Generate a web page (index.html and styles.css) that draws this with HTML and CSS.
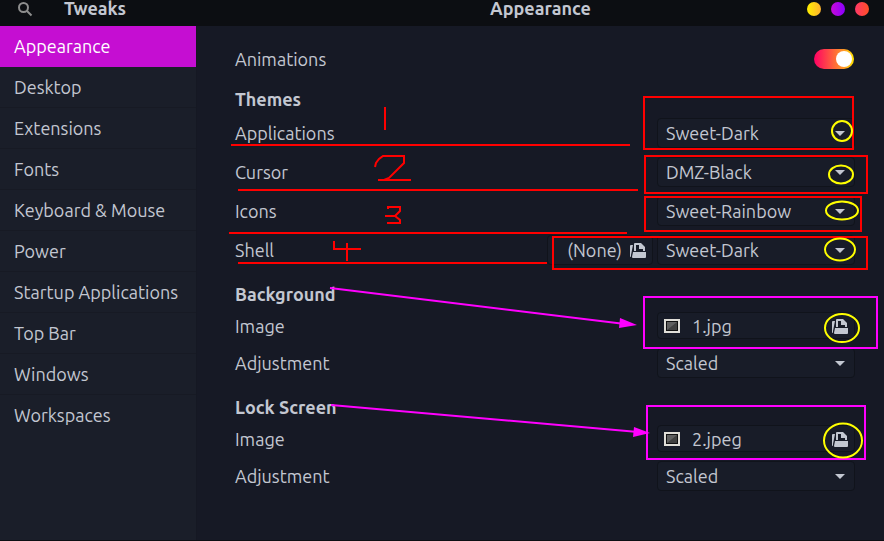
FILE: index.html
```
<!DOCTYPE html>
<html lang="en">
<head>
<meta charset="utf-8">
<title>Tweaks</title>
<link rel="stylesheet" href="styles.css">
</head>
<body>

<svg class="defs" aria-hidden="true">
	<symbol id="open" viewBox="0 0 16 16">
		<path d="M0 4q0-1 1-1h2L1 13v2q-1 0-1-1z"/>
		<path d="M4 9V2q0-1 1-1h6l4 4v4h-2V7H9V3H6v6z"/>
		<path d="M3 10h13v5q0 1-1 1H3q-1 0-1-1z"/>
	</symbol>
	<symbol id="arrow" viewBox="0 0 10 6">
		<path d="M0 0h10L5 5z"/>
	</symbol>
	<symbol id="picture" viewBox="0 0 16 14">
		<path d="M0 0h16v14H0z" fill="#e0ded8"/>
		<path d="M2 2h12v10H2z" fill="#111"/>
		<path d="M3 3h10v8H3z" fill="#606060"/>
		<path d="M3 11 13 3v8z" fill="#404040"/>
	</symbol>
</svg>

<div class="window">

<header class="titlebar">
	<div class="side-title">
		<button class="search" aria-label="Search">
			<svg width="16" height="16" viewBox="0 0 16 16" fill="none" stroke="#8e8e8e" stroke-width="2"><circle cx="6.5" cy="6.5" r="4.5"/><path d="M10 10l4.500 4.500"/></svg>
		</button>
		<h1>Tweaks</h1>
	</div>
	<div class="main-title">
		<h1>Appearance</h1>
		<div class="controls">
			<button class="dot minimize" aria-label="Minimize"></button>
			<button class="dot maximize" aria-label="Maximize"></button>
			<button class="dot close" aria-label="Close"></button>
		</div>
	</div>
</header>

<nav class="sidebar">
	<a class="active" href="#appearance">Appearance</a>
	<a href="#desktop">Desktop</a>
	<a href="#extensions">Extensions</a>
	<a href="#fonts">Fonts</a>
	<a href="#keyboard">Keyboard &amp; Mouse</a>
	<a href="#power">Power</a>
	<a href="#startup">Startup Applications</a>
	<a href="#topbar">Top Bar</a>
	<a href="#windows">Windows</a>
	<a href="#workspaces">Workspaces</a>
</nav>

<main class="content">
	<div class="row">
		<label for="animations">Animations</label>
		<input class="switch" type="checkbox" id="animations" checked>
	</div>

	<section class="group themes">
		<h2>Themes</h2>
		<div class="row">
			<label for="applications">Applications</label>
			<div class="combo"><select id="applications"><option>Sweet-Dark</option></select><svg class="arrow"><use href="#arrow"/></svg></div>
		</div>
		<div class="row">
			<label for="cursor">Cursor</label>
			<div class="combo"><select id="cursor"><option>DMZ-Black</option></select><svg class="arrow"><use href="#arrow"/></svg></div>
		</div>
		<div class="row">
			<label for="icons">Icons</label>
			<div class="combo"><select id="icons"><option>Sweet-Rainbow</option></select><svg class="arrow"><use href="#arrow"/></svg></div>
		</div>
		<div class="row">
			<label for="shell">Shell</label>
			<button class="none">(None)<svg class="open"><use href="#open"/></svg></button>
			<div class="combo"><select id="shell"><option>Sweet-Dark</option></select><svg class="arrow"><use href="#arrow"/></svg></div>
		</div>
	</section>

	<section class="group">
		<h2>Background</h2>
		<div class="row file-row">
			<label for="bg-image">Image</label>
			<button class="file" id="bg-image"><svg class="picture"><use href="#picture"/></svg><span>1.jpg</span><svg class="open"><use href="#open"/></svg></button>
		</div>
		<div class="row">
			<label for="bg-adjust">Adjustment</label>
			<div class="combo"><select id="bg-adjust"><option>Scaled</option></select><svg class="arrow"><use href="#arrow"/></svg></div>
		</div>
	</section>

	<section class="group">
		<h2>Lock Screen</h2>
		<div class="row file-row">
			<label for="lock-image">Image</label>
			<button class="file" id="lock-image"><svg class="picture"><use href="#picture"/></svg><span>2.jpeg</span><svg class="open"><use href="#open"/></svg></button>
		</div>
		<div class="row">
			<label for="lock-adjust">Adjustment</label>
			<div class="combo"><select id="lock-adjust"><option>Scaled</option></select><svg class="arrow"><use href="#arrow"/></svg></div>
		</div>
	</section>
</main>

</div>

<!-- pen marks over the settings -->
<svg class="marks" width="884" height="541" viewBox="0 0 884 541" aria-hidden="true">
	<g class="red">
		<path d="M231 145H630M238 190H638M229 233H627M238 263H547"/>
		<path d="M385 107v23"/>
		<path d="M375 167l1-4 3-4 4-3h21v7l-15 15-5 2h-6M378 180h33"/>
		<path d="M388 209v-2h12v4l-5 5h-10M395 216l5 4v3h-13"/>
		<path d="M334 241v8h27M347 243v18"/>
		<path d="M644 97H853V149H644zM645 156H867V193H645zM645 197H861V231H645zM553 237H867V269H553z"/>
	</g>
	<g class="pink">
		<path d="M644 297H877V348H644zM647 406H865V459H647z"/>
		<path d="M330 288L625 324M331 405L638 432"/>
		<path class="head" d="M637 325l-18 3 1-10zM650 433l-17 4 1-10z"/>
	</g>
	<g class="yellow">
		<ellipse cx="842" cy="131" rx="10" ry="10"/>
		<ellipse cx="841" cy="174.500" rx="12" ry="9"/>
		<ellipse cx="842" cy="210.500" rx="16" ry="9"/>
		<ellipse cx="840" cy="249.500" rx="15" ry="11"/>
		<ellipse cx="842" cy="328" rx="17" ry="14"/>
		<ellipse cx="843" cy="440.500" rx="19" ry="17"/>
	</g>
</svg>

</body>
</html>
```

FILE: styles.css
```
* { box-sizing: border-box; }
body { margin: 0; background: #161925; color: #c3c7d1; font: 18px/24px "Ubuntu", "Noto Sans", sans-serif; }
h1, h2 { margin: 0; font-size: 18px; line-height: 24px; font-weight: bold; }
button, select { margin: 0; padding: 0; font: inherit; color: inherit; background: none; border: 0; }
svg { display: block; fill: #c3c7d1; }
.defs { position: absolute; width: 0; height: 0; }

.window { display: grid; grid-template-columns: 197px 1fr; grid-template-rows: 26px 1fr; min-height: 100vh; border-bottom: 1px solid #0c0e13; }

.titlebar { grid-column: 1 / 3; display: grid; grid-template-columns: subgrid; background: #0c0e12; padding-bottom: 9px; }
.titlebar h1 { line-height: 17px; }
.side-title { display: flex; align-items: center; gap: 31px; padding-left: 17px; }
.search svg { fill: none; }
.main-title { display: grid; grid-template-columns: 1fr auto 1fr; align-items: center; }
.main-title h1 { grid-column: 2; }
.controls { display: flex; justify-content: flex-end; gap: 10px; padding-right: 15px; }
.dot { width: 14px; height: 14px; border-radius: 50%; }
.minimize { background: linear-gradient(90deg, #fff000, #ffb22e); }
.maximize { background: linear-gradient(90deg, #c80ad8, #8a00ff); }
.close { background: linear-gradient(90deg, #ff3868, #ff4f25); }

.sidebar { background: #1a1e29; border-right: 1px solid #151823; }
.sidebar a { display: block; height: 41px; padding: 8px 14px; border-bottom: 1px solid #171a24; color: inherit; text-decoration: none; white-space: nowrap; }
.sidebar a.active { background: #c50ed2; border-color: #c50ed2; color: #fff; }
.sidebar a:last-child { border-color: transparent; }

.content { padding: 18px 29px 18px 38px; }
.row { display: flex; align-items: center; gap: 4px; height: 30px; margin-bottom: 9px; }
.row label { margin-right: auto; }
.row:last-child { margin-bottom: 0; }
.file-row { height: 27px; }
.group { margin-top: 17px; }
.group h2 { margin-bottom: 6px; }
.themes { margin-top: 13px; }
.themes h2 { margin-bottom: 7px; }

.combo, .file, .none { border: 1px solid #10131b; border-radius: 4px; background: #181c28; }
.combo { position: relative; width: 198px; height: 30px; }
.combo select { appearance: none; width: 100%; height: 28px; padding: 0 30px 0 8px; }
.arrow { position: absolute; right: 9px; top: 12px; width: 10px; height: 6px; pointer-events: none; }
.file { display: flex; align-items: center; width: 198px; height: 27px; padding: 0 6px; }
.file span { margin: 0 auto 0 12px; }
.picture { width: 16px; height: 14px; }
.open { width: 16px; height: 16px; }
.none { display: flex; align-items: center; justify-content: flex-end; gap: 8px; width: 106px; height: 30px; padding: 0 6px; }

.switch { appearance: none; display: flex; justify-content: flex-end; width: 40px; height: 20px; margin: 0 1px 0 0; padding: 2px; border-radius: 10px; background: linear-gradient(90deg, #ff0065, #ff9a25 75%, #ffe600); }
.switch::before { content: ""; width: 16px; height: 16px; border-radius: 50%; background: #fff; }

.marks { position: absolute; left: 0; top: 0; fill: none; stroke-width: 2; pointer-events: none; }
.red { stroke: #f00; }
.pink { stroke: #f0f; }
.head { fill: #f0f; stroke: none; }
.yellow { stroke: #ff0; }
```
